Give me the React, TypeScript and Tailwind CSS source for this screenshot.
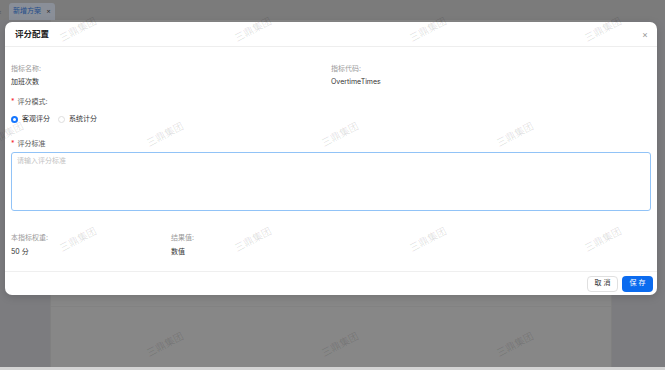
import React from "react";

const font = { fontFamily: 'Inter, "Noto Sans CJK SC", sans-serif' };

const marks: [number, number][] = [
  [58, 22], [233, 22], [408, 22], [583, 22],
  [-15, 127], [145, 127], [320, 127], [495, 127],
  [58, 232], [233, 232], [408, 232], [583, 232],
  [145, 337], [320, 337], [495, 337],
];

function Label({ children, required }: { children: React.ReactNode; required?: boolean }) {
  return (
    <div className="flex items-center h-[10px] text-[7px] leading-[10px] text-[#9a9a9a]">
      {required && <span className="text-[#f5222d] mr-[3px] text-[7px]">*</span>}
      <span className={required ? "text-[#555]" : ""}>{children}</span>
    </div>
  );
}

function Value({ children, mt = "mt-[3px]" }: { children: React.ReactNode; mt?: string }) {
  return <div className={`h-[10px] ${mt} text-[7px] leading-[10px] text-[#333]`}>{children}</div>;
}

export default function App() {
  return (
    <div className="relative w-[665px] h-[370px] overflow-hidden bg-[#7d7d80]" style={font}>
      {/* background page */}
      <div className="flex flex-col h-full">
        <div className="h-[20px] flex items-end bg-[#7b7b7b]">
          <span className="text-[7px] text-[#555] leading-[17px] w-[12px] -ml-[3px]">×</span>
          <div className="h-[17px] w-[46px] bg-[#8a8f98] rounded-t-[3px] flex items-center justify-between px-[4px]">
            <span className="text-[7px] text-[#1f4d8a]">新增方案</span>
            <span className="text-[7px] text-[#333]">×</span>
          </div>
        </div>
        <div className="flex-1 flex">
          <div className="w-[50px] bg-[#7c7c7f]" />
          <div className="w-[562px] bg-[#878787] border-l border-r border-[#808080] flex flex-col">
            <div className="h-[287px] border-b border-[#828282]" />
          </div>
          <div className="flex-1 bg-[#7c7c7f]" />
        </div>
        <div className="h-[3px] bg-[#d4d4d4]" />
      </div>

      {/* modal */}
      <div className="absolute left-[5px] top-[22px] w-[652px] h-[273px] bg-white rounded-[7px] flex flex-col shadow-[0_2px_8px_rgba(0,0,0,0.15)]">
        <div className="h-[25px] flex items-center justify-between pl-[10px] pr-[9px] border-b border-[#eeeeee]">
          <span className="text-[8.5px] font-semibold text-[#222]">评分配置</span>
          <span className="text-[9px] text-[#999] leading-none">×</span>
        </div>
        <div className="flex-1 px-[6px] pt-[17px]">
          <div className="grid grid-cols-2">
            <div>
              <Label>指标名称:</Label>
              <Value>加班次数</Value>
            </div>
            <div>
              <Label>指标代码:</Label>
              <Value>OvertimeTimes</Value>
            </div>
          </div>
          <div className="mt-[10px]">
            <Label required>评分模式:</Label>
          </div>
          <div className="mt-[7px] h-[10px] flex items-center text-[7px] text-[#333]">
            <span className="w-[7px] h-[7px] rounded-full border-[2px] border-[#1677ff] bg-white" />
            <span className="ml-[4px]">客观评分</span>
            <span className="ml-[8px] w-[7px] h-[7px] rounded-full border border-[#dedede] bg-white" />
            <span className="ml-[4px]">系统计分</span>
          </div>
          <div className="mt-[15px]">
            <Label required>评分标准</Label>
          </div>
          <div className="mt-[3px] h-[59px] border border-[#91c3f7] rounded-[3px] px-[5px] pt-[3px] text-[7px] leading-[10px] text-[#c2c2c2]">
            请输入评分标准
          </div>
          <div className="grid grid-cols-4 mt-[22px]">
            <div>
              <Label>本指标权重:</Label>
              <Value mt="mt-[4px]">50 分</Value>
            </div>
            <div>
              <Label>结果值:</Label>
              <Value mt="mt-[4px]">数值</Value>
            </div>
          </div>
        </div>
        <div className="h-[24px] border-t border-[#efefef] flex items-center justify-end gap-[4px] pr-[4px]">
          <div className="w-[31px] h-[16px] rounded-[4px] border border-[#e0e0e0] flex items-center justify-center text-[7px] text-[#333]">
            取 消
          </div>
          <div className="w-[31px] h-[16px] rounded-[4px] bg-[#0b6bef] flex items-center justify-center text-[7px] text-white">
            保 存
          </div>
        </div>
      </div>

      {/* watermark */}
      <div className="absolute inset-0 pointer-events-none">
        {marks.map(([x, y], i) => (
          <span
            key={i}
            className="absolute text-[10px] text-[rgba(0,0,0,0.12)] whitespace-nowrap -rotate-[28deg]"
            style={{ left: x, top: y }}
          >
            三鼎集团
          </span>
        ))}
      </div>
    </div>
  );
}
